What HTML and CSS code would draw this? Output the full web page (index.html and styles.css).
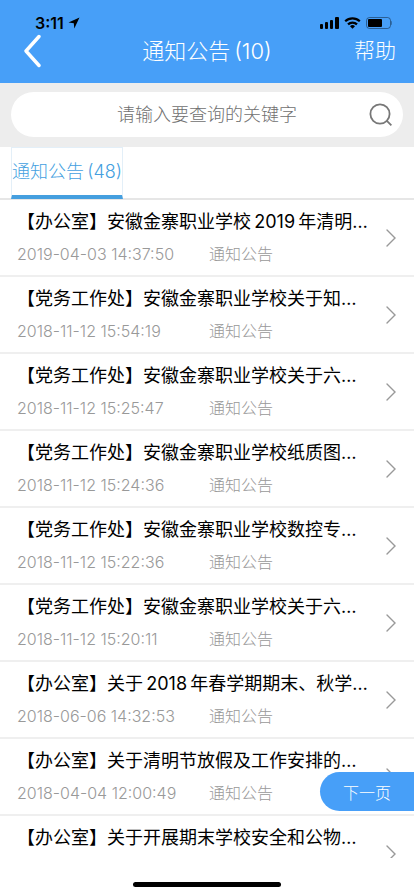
FILE: index.html
```
<!DOCTYPE html>
<html lang="zh-CN">
<head>
    <meta charset="UTF-8">
    <meta name="viewport" content="width=device-width, initial-scale=1.0">
    <title>通知公告</title>
    <link rel="stylesheet" href="styles.css">
</head>
<body>

    <header class="header">
        <!-- 状态栏 -->
        <div class="status-bar">
            <span class="clock">3:11</span>
            <svg class="location" width="12" height="12" viewBox="0 0 12 12"><path d="M11.5 .5 .5 5.6l5.3.6.5 5.3z"/></svg>
            <svg width="72" height="14" viewBox="0 0 72 14">
                <rect x="0" y="8" width="3" height="5" rx="1"/>
                <rect x="5" y="6" width="3" height="7" rx="1"/>
                <rect x="10" y="4" width="3" height="9" rx="1"/>
                <rect x="15" y="1" width="4" height="12" rx="1"/>
                <g fill="none" stroke="#000" stroke-width="2.2">
                    <path d="M25.2 5.2a10.6 10.6 0 0 1 14.600 0"/>
                    <path d="M28 8.400a6.400 6.400 0 0 1 9 0"/>
                </g>
                <path d="M32.5 12.800l-2.500-2.500a3.600 3.600 0 0 1 5 0z"/>
                <rect x="46.5" y="1.5" width="24" height="11" rx="3" fill="none" stroke="#000" stroke-opacity=".4"/>
                <rect x="48" y="3" width="14" height="8" rx="1"/>
                <path d="M71.400 5v4q1-.6 1-2t-1-2z" fill-opacity=".5"/>
            </svg>
        </div>
        <div class="nav">
            <button class="back" aria-label="返回">
                <svg width="18" height="34" viewBox="0 0 18 34"><path d="M15 2.5 2 17l13 14.5" fill="none" stroke="#fff" stroke-width="3.4" stroke-linecap="round" stroke-linejoin="round"/></svg>
            </button>
            <h1>通知公告&thinsp;(10)</h1>
            <a class="help" href="#">帮助</a>
        </div>
    </header>

    <form class="search">
        <div class="search-box">
            <input type="text" aria-label="关键字" placeholder="请输入要查询的关键字">
            <button type="button" aria-label="搜索">
                <svg width="24" height="24" viewBox="0 0 24 24" fill="none" stroke="#777" stroke-width="1.8"><circle cx="11" cy="11" r="9.6"/><path d="M17.6 17.6 22.4 22.4"/></svg>
            </button>
        </div>
    </form>

    <nav class="tabs">
        <a class="tab" href="#">通知公告&thinsp;(48)</a>
    </nav>

    <!-- 公告列表 -->
    <main class="list">
        <a class="item" href="#">
            <div class="info">
                <p class="title">【办公室】安徽金寨职业学校&thinsp;2019&thinsp;年清明…</p>
                <p class="meta"><span class="date">2019-04-03 14:37:50</span><span>通知公告</span></p>
            </div>
            <svg class="arrow" viewBox="0 0 10 18"><path d="M1 1l8 8-8 8"/></svg>
        </a>
        <a class="item" href="#">
            <div class="info">
                <p class="title">【党务工作处】安徽金寨职业学校关于知…</p>
                <p class="meta"><span class="date">2018-11-12 15:54:19</span><span>通知公告</span></p>
            </div>
            <svg class="arrow" viewBox="0 0 10 18"><path d="M1 1l8 8-8 8"/></svg>
        </a>
        <a class="item" href="#">
            <div class="info">
                <p class="title">【党务工作处】安徽金寨职业学校关于六…</p>
                <p class="meta"><span class="date">2018-11-12 15:25:47</span><span>通知公告</span></p>
            </div>
            <svg class="arrow" viewBox="0 0 10 18"><path d="M1 1l8 8-8 8"/></svg>
        </a>
        <a class="item" href="#">
            <div class="info">
                <p class="title">【党务工作处】安徽金寨职业学校纸质图…</p>
                <p class="meta"><span class="date">2018-11-12 15:24:36</span><span>通知公告</span></p>
            </div>
            <svg class="arrow" viewBox="0 0 10 18"><path d="M1 1l8 8-8 8"/></svg>
        </a>
        <a class="item" href="#">
            <div class="info">
                <p class="title">【党务工作处】安徽金寨职业学校数控专…</p>
                <p class="meta"><span class="date">2018-11-12 15:22:36</span><span>通知公告</span></p>
            </div>
            <svg class="arrow" viewBox="0 0 10 18"><path d="M1 1l8 8-8 8"/></svg>
        </a>
        <a class="item" href="#">
            <div class="info">
                <p class="title">【党务工作处】安徽金寨职业学校关于六…</p>
                <p class="meta"><span class="date">2018-11-12 15:20:11</span><span>通知公告</span></p>
            </div>
            <svg class="arrow" viewBox="0 0 10 18"><path d="M1 1l8 8-8 8"/></svg>
        </a>
        <a class="item" href="#">
            <div class="info">
                <p class="title">【办公室】关于&thinsp;2018&thinsp;年春学期期末、秋学…</p>
                <p class="meta"><span class="date">2018-06-06 14:32:53</span><span>通知公告</span></p>
            </div>
            <svg class="arrow" viewBox="0 0 10 18"><path d="M1 1l8 8-8 8"/></svg>
        </a>
        <a class="item" href="#">
            <div class="info">
                <p class="title">【办公室】关于清明节放假及工作安排的…</p>
                <p class="meta"><span class="date">2018-04-04 12:00:49</span><span>通知公告</span></p>
            </div>
            <svg class="arrow" viewBox="0 0 10 18"><path d="M1 1l8 8-8 8"/></svg>
        </a>
        <a class="item" href="#">
            <div class="info">
                <p class="title">【办公室】关于开展期末学校安全和公物…</p>
                <p class="meta"></p>
            </div>
            <svg class="arrow" viewBox="0 0 10 18"><path d="M1 1l8 8-8 8"/></svg>
        </a>
    </main>

    <button class="next">下一页</button>

    <footer class="home"><div class="home-bar"></div></footer>

</body>
</html>
```
FILE: styles.css
```
* {
    box-sizing: border-box;
}

body {
    margin: 0;
    height: 100vh;
    display: flex;
    flex-direction: column;
    position: relative;
    overflow: hidden;
    background: #fff;
    font-family: Inter, "Noto Sans CJK SC", sans-serif;
}

a {
    color: inherit;
    text-decoration: none;
}

button {
    border: none;
    background: none;
    padding: 0;
    font-family: inherit;
    cursor: pointer;
}

svg {
    display: block;
}

/* 顶部 */
.header {
    background: #479ff8;
    color: #fff;
    padding: 16px 18px 14px 24px;
}

.status-bar {
    display: flex;
    align-items: center;
    height: 14px;
    padding: 0 4px 0 11px;
    margin-bottom: 3px;
}

.clock {
    color: #000;
    font-size: 16px;
    font-weight: 600;
}

.location {
    margin: 0 auto 0 4px;
}

.nav {
    display: grid;
    grid-template-columns: 36px 1fr 42px;
    align-items: center;
    height: 36px;
}

.nav h1 {
    margin: 0;
    font-size: 22px;
    font-weight: 300;
    line-height: 36px;
    text-align: center;
}

.help {
    font-size: 21px;
    font-weight: 300;
    line-height: 36px;
}

/* 搜索框 */
.search {
    background: #ededed;
    padding: 9px 11px 10px;
}

.search-box {
    display: flex;
    align-items: center;
    height: 45px;
    padding: 0 10px;
    border-radius: 23px;
    background: #fff;
}

.search-box input {
    flex: 1;
    min-width: 0;
    padding: 0 0 0 24px;
    border: none;
    outline: none;
    background: none;
    font-family: inherit;
    font-size: 18px;
    font-weight: 300;
    text-align: center;
}

.search-box input::placeholder {
    color: #707070;
}

/* 标签 */
.tabs {
    display: flex;
    padding: 0 11px;
    border-bottom: 2px solid #e6e6e6;
}

.tab {
    height: 52px;
    margin-bottom: -1px;
    border: 1px solid #e3eff8;
    border-bottom: 4px solid #459fdf;
    color: #459fdf;
    font-size: 18px;
    font-weight: 300;
    line-height: 47px;
}

/* 列表 */
.list {
    flex: 1;
    min-height: 0;
    overflow: hidden;
}

.item {
    display: flex;
    align-items: center;
    justify-content: space-between;
    height: 77px;
    padding: 0 18px 0 17px;
    border-bottom: 2px solid #efefef;
}

.info {
    flex: 1;
    min-width: 0;
}

.title {
    margin: 0;
    color: #000;
    font-size: 18px;
    line-height: 32px;
    white-space: nowrap;
}

.meta {
    display: flex;
    min-height: 32px;
    margin: 0;
    color: #999;
    font-size: 16px;
    font-weight: 300;
    line-height: 32px;
}

.date {
    width: 192px;
}

.arrow {
    flex: none;
    width: 10px;
    height: 18px;
    fill: none;
    stroke: #999;
    stroke-width: 1.4;
    stroke-linecap: round;
}

/* 下一页 */
.next {
    position: absolute;
    right: 0;
    bottom: 85px;
    width: 94px;
    height: 39px;
    border-radius: 20px 0 0 20px;
    background: #479ff8;
    color: #fff;
    font-size: 16px;
    font-weight: 300;
}

.home {
    display: flex;
    justify-content: center;
    height: 38px;
    padding-top: 24px;
}

.home-bar {
    width: 148px;
    height: 5px;
    border-radius: 3px;
    background: #000;
}
```
